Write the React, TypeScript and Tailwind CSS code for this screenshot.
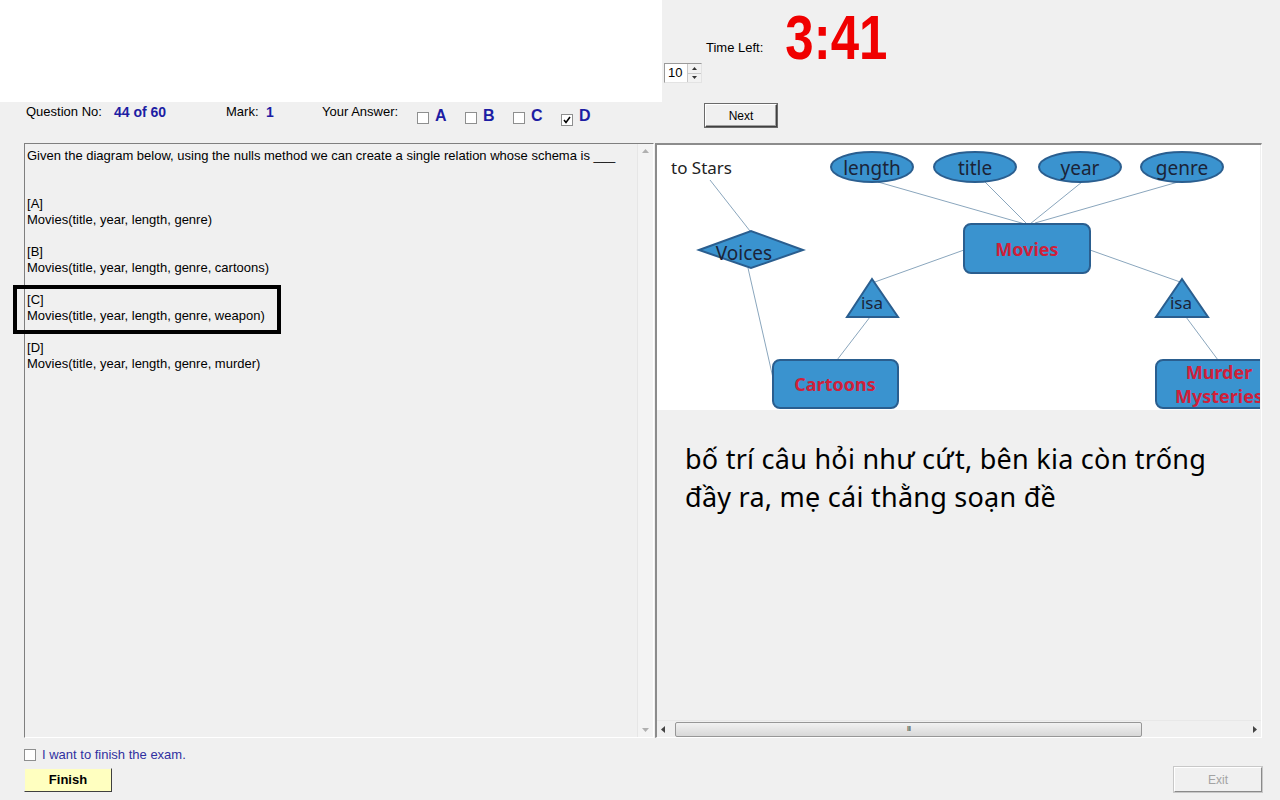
import React from "react"

const blue = "text-[#1d1da3]"

const Check = ({ checked = false }: { checked?: boolean }) => (
  <span className="inline-flex w-[12px] h-[12px] items-center justify-center border border-[#8e8f8f] bg-white">
    {checked && (
      <svg width="8" height="8" viewBox="0 0 8 8">
        <path d="M1 4 L3 6.5 L7 1" fill="none" stroke="#000" strokeWidth="1.6" />
      </svg>
    )}
  </span>
)

const Diagram = () => {
  const fill = "#3a93cf"
  const edge = "#2a5e8f"
  const line = "#8aa6bd"
  const ent = "#d0203a"
  const ink = "#1b2438"
  const f = "'Noto Sans', 'Open Sans', sans-serif"
  const attrs = [
    { cx: 872, label: "length" },
    { cx: 975, label: "title" },
    { cx: 1080, label: "year" },
    { cx: 1182, label: "genre" },
  ]
  return (
    <svg width="603" height="265" viewBox="657 145 603 265" className="block">
      <rect x="657" y="145" width="603" height="265" fill="#fff" />
      {/* connectors */}
      <g stroke={line} strokeWidth="1">
        <line x1="878" y1="182" x2="1025" y2="224" />
        <line x1="985" y1="182" x2="1027" y2="224" />
        <line x1="1082" y1="182" x2="1030" y2="224" />
        <line x1="1178" y1="182" x2="1035" y2="223" />
        <line x1="964" y1="250" x2="872" y2="283" />
        <line x1="1090" y1="250" x2="1183" y2="283" />
        <line x1="870" y1="317" x2="837" y2="360" />
        <line x1="1186" y1="317" x2="1218" y2="360" />
        <line x1="710" y1="180" x2="750" y2="231" />
        <line x1="748" y1="268" x2="773" y2="378" />
      </g>
      <text x="671" y="174" fontFamily={f} fontSize="17" fill="#222">to Stars</text>
      {attrs.map((a) => (
        <g key={a.label}>
          <ellipse cx={a.cx} cy="167" rx="41" ry="15" fill={fill} stroke={edge} strokeWidth="2" />
          <text x={a.cx} y="168" fontFamily={f} fontSize="19" fill={ink} textAnchor="middle" dominantBaseline="central">
            {a.label}
          </text>
        </g>
      ))}
      <rect x="964" y="224" width="126" height="49" rx="7" fill={fill} stroke={edge} strokeWidth="2" />
      <text x="1027" y="249" fontFamily={f} fontSize="18" fontWeight="bold" fill={ent} textAnchor="middle" dominantBaseline="central">Movies</text>
      <polygon points="699,250 751,231 803,250 751,268" fill={fill} stroke={edge} strokeWidth="2" />
      <text x="744" y="253" fontFamily={f} fontSize="19" fill={ink} textAnchor="middle" dominantBaseline="central">Voices</text>
      <polygon points="872,279 898,317 847,317" fill={fill} stroke={edge} strokeWidth="2" />
      <text x="872" y="302" fontFamily={f} fontSize="17" fill={ink} textAnchor="middle" dominantBaseline="central">isa</text>
      <polygon points="1182,279 1208,317 1156,317" fill={fill} stroke={edge} strokeWidth="2" />
      <text x="1181" y="302" fontFamily={f} fontSize="17" fill={ink} textAnchor="middle" dominantBaseline="central">isa</text>
      <rect x="773" y="360" width="125" height="48" rx="7" fill={fill} stroke={edge} strokeWidth="2" />
      <text x="835" y="384" fontFamily={f} fontSize="18" fontWeight="bold" fill={ent} textAnchor="middle" dominantBaseline="central">Cartoons</text>
      <rect x="1156" y="360" width="130" height="48" rx="7" fill={fill} stroke={edge} strokeWidth="2" />
      <text x="1219" y="372" fontFamily={f} fontSize="18" fontWeight="bold" fill={ent} textAnchor="middle" dominantBaseline="central">Murder</text>
      <text x="1219" y="396" fontFamily={f} fontSize="18" fontWeight="bold" fill={ent} textAnchor="middle" dominantBaseline="central">Mysteries</text>
    </svg>
  )
}

const options = [
  { key: "A", text: "Movies(title, year, length, genre)" },
  { key: "B", text: "Movies(title, year, length, genre, cartoons)" },
  { key: "C", text: "Movies(title, year, length, genre, weapon)" },
  { key: "D", text: "Movies(title, year, length, genre, murder)" },
]

export default function App() {
  return (
    <div className="relative w-[1280px] h-[800px] overflow-hidden bg-[#f0f0f0] font-['Liberation_Sans',Arial,sans-serif] text-[13px] text-black">
      {/* top strip */}
      <div className="flex h-[102px]">
        <div className="w-[662px] bg-white" />
        <div className="flex flex-col">
          <div className="flex items-start h-[63px]">
            <span className="ml-[44px] mt-[41px] leading-[14px]">Time Left:</span>
            <span className="ml-[22px] mt-[7px] text-[51px] leading-[50px] font-bold text-[#f00000] origin-top scale-y-[1.23]">3:41</span>
          </div>
          <div className="ml-[2px] flex w-[38px] h-[20px] border border-[#9a9a9a] border-r-[#e3e3e3] border-b-[#e3e3e3] bg-white">
            <span className="flex-1 pl-[3px] text-[13px] leading-[18px]">10</span>
            <span className="flex flex-col w-[14px] border-l border-[#c9c9c9]">
              <span className="flex-1 flex items-center justify-center border-b border-[#c9c9c9] bg-[#f2f2f2]">
                <svg width="5" height="3" viewBox="0 0 5 3"><path d="M0 3 L2.5 0 L5 3Z" fill="#333" /></svg>
              </span>
              <span className="flex-1 flex items-center justify-center bg-[#f2f2f2]">
                <svg width="5" height="3" viewBox="0 0 5 3"><path d="M0 0 L2.5 3 L5 0Z" fill="#333" /></svg>
              </span>
            </span>
          </div>
        </div>
      </div>

      {/* question row */}
      <div className="flex items-start h-[41px] pt-[2px]">
        <span className="ml-[26px] w-[88px] mt-[1px] leading-[14px]">Question No:</span>
        <span className={`w-[112px] mt-[1px] leading-[14px] text-[14px] font-bold ${blue}`}>44 of 60</span>
        <span className="w-[40px] mt-[1px] leading-[14px]">Mark:</span>
        <span className={`w-[56px] mt-[1px] leading-[14px] text-[14px] font-bold ${blue}`}>1</span>
        <span className="w-[95px] mt-[1px] leading-[14px]">Your Answer:</span>
        {["A", "B", "C", "D"].map((k) => (
          <span key={k} className="flex items-start w-[48px]">
            <span className="mt-[6px]"><Check checked={k === "D"} /></span>
            <span className={`ml-[6px] mt-[3px] text-[16px] leading-[18px] font-bold ${blue}`}>{k}</span>
          </span>
        ))}
        <span className="w-[96px]" />
        <button className="w-[72px] h-[23px] border border-t-white border-l-white border-r-[#404040] border-b-[#404040] shadow-[inset_-1px_-1px_0_#a0a0a0,0_0_0_1px_#6a6a6a] bg-[#f0f0f0] text-[12px]">
          Next
        </button>
      </div>

      {/* panels */}
      <div className="flex ml-[24px] h-[595px]">
        <div className="flex w-[630px] h-full border border-[#7f7f7f] border-r-white border-b-white">
          <div className="flex-1 pl-[2px] pt-[4px] leading-[16px]">
            <div>Given the diagram below, using the nulls method we can create a single relation whose schema is ___</div>
            <div className="h-[32px]" />
            {options.map((o) => (
              <div key={o.key} className="mb-[16px]">
                <div>[{o.key}]</div>
                <div>{o.text}</div>
              </div>
            ))}
          </div>
          <div className="flex flex-col justify-between items-center w-[16px] py-[5px] bg-[#f3f3f3] border-l border-[#e6e6e6]">
            <svg width="7" height="4" viewBox="0 0 7 4"><path d="M0 4 L3.5 0 L7 4Z" fill="#b0b0b0" /></svg>
            <svg width="7" height="4" viewBox="0 0 7 4"><path d="M0 0 L3.5 4 L7 0Z" fill="#b0b0b0" /></svg>
          </div>
        </div>

        <div className="flex flex-col w-[607px] ml-[1px] h-full border-t-2 border-l-2 border-[#8c8c8c] border-r border-b border-r-white border-b-white">
          <Diagram />
          <div className="flex-1 pl-[28px] pt-[30px] text-[27px] leading-[38px] font-['Noto_Sans','Open_Sans',sans-serif] tracking-[0.25px]">
            <div>bố trí câu hỏi như cứt, bên kia còn trống</div>
            <div>đầy ra, mẹ cái thằng soạn đề</div>
          </div>
          <div className="flex items-center h-[17px] px-[4px] bg-[#f0f0f0] border-t border-[#e8e8e8]">
            <svg width="4" height="7" viewBox="0 0 4 7"><path d="M4 0 L0 3.5 L4 7Z" fill="#444" /></svg>
            <div className="ml-[10px] w-[467px] h-[15px] flex items-center justify-center rounded-[2px] border border-[#979797] bg-gradient-to-b from-[#f2f2f2] to-[#d8d8d8]">
              <span className="text-[8px] leading-none tracking-[-1px] text-[#555]">III</span>
            </div>
            <div className="flex-1" />
            <svg width="4" height="7" viewBox="0 0 4 7"><path d="M0 0 L4 3.5 L0 7Z" fill="#444" /></svg>
          </div>
        </div>
      </div>

      {/* finish strip */}
      <div className="flex items-end justify-between pl-[24px] pr-[18px] mt-[10px]">
        <div className="flex flex-col">
          <div className="flex items-center">
            <span className="inline-flex w-[12px] h-[12px] border border-[#8e8f8f] bg-white" />
            <span className="ml-[6px] text-[#3030a0] leading-[14px]">I want to finish the exam.</span>
          </div>
          <button className="mt-[6px] w-[88px] h-[24px] bg-[#ffffc0] border border-t-[#f0f0f0] border-l-[#f0f0f0] border-r-[#404040] border-b-[#404040] text-[13px] font-bold">
            Finish
          </button>
        </div>
        <button className="w-[88px] h-[25px] border border-t-white border-l-white border-r-[#8a8a8a] border-b-[#8a8a8a] shadow-[0_0_0_1px_#c8c8c8] text-[#a3a3a3] text-[12px]">
          Exit
        </button>
      </div>

      {/* answer highlight drawn over the option list */}
      <div className="absolute left-[13px] top-[285px] w-[268px] h-[49px] border-4 border-black" />
    </div>
  )
}
